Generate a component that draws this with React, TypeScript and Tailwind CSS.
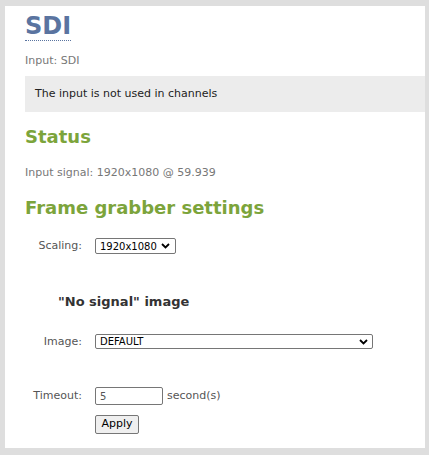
export default function App() {
  return (
    <div className="w-[429px] h-[455px] bg-[#dedede] pl-[5px] pt-[6px] pr-[4px] pb-[7px] font-['DejaVu_Sans',sans-serif]">
      <div className="h-full bg-white pl-[20px] pt-[6px]">
        {/* ===== TITLE ===== */}
        <h1 className="inline-block text-[24px] leading-[28px] font-bold text-[#5a74a0] border-b border-dotted border-[#5a74a0]">
          SDI
        </h1>
        <p className="mt-[13px] text-[11px] leading-[14px] text-[#777]">Input: SDI</p>

        <div className="mt-[8px] h-[36px] bg-[#ececec] pl-[10px] flex items-center text-[11px] text-[#222]">
          The input is not used in channels
        </div>

        {/* ===== STATUS ===== */}
        <h2 className="mt-[14px] text-[18px] leading-[22px] font-bold text-[#7ca43b]">Status</h2>
        <p className="mt-[18px] text-[11px] leading-[14px] text-[#777]">
          Input signal: 1920x1080 @ 59.939
        </p>

        {/* ===== FRAME GRABBER ===== */}
        <h2 className="mt-[17px] text-[18px] leading-[22px] font-bold text-[#7ca43b]">
          Frame grabber settings
        </h2>

        <div className="mt-[19px] flex items-center text-[11px] text-[#555]">
          <span className="w-[57px] text-right">Scaling:</span>
          <span className="ml-[13px] h-[16px] w-[81px] border border-[#767676] rounded-[2px] flex items-center pl-[4px] text-[10px] text-black">
            1920x1080
            <span className="ml-[4px]">
              <Chevron />
            </span>
          </span>
        </div>

        <h3 className="mt-[38px] ml-[33px] text-[13px] leading-[18px] font-bold text-[#333]">
          "No signal" image
        </h3>

        <div className="mt-[23px] flex items-center text-[11px] text-[#555]">
          <span className="w-[57px] text-right">Image:</span>
          <span className="ml-[13px] h-[15px] w-[278px] border border-[#767676] rounded-[2px] flex items-center justify-between pl-[4px] pr-[4px] text-[10px] text-black">
            DEFAULT
            <Chevron />
          </span>
        </div>

        <div className="mt-[37px] flex items-center text-[11px] text-[#555]">
          <span className="w-[57px] text-right">Timeout:</span>
          <span className="ml-[13px] h-[18px] w-[68px] border border-[#767676] rounded-[2px] flex items-center pl-[4px] text-[10px] text-[#555]">
            5
          </span>
          <span className="ml-[4px] text-[11px]">second(s)</span>
        </div>

        <div className="mt-[5px] ml-[70px]">
          <button className="h-[19px] w-[44px] border border-[#767676] rounded-[2px] bg-[#efefef] text-[11px] text-black">
            Apply
          </button>
        </div>
      </div>
    </div>
  );
}

function Chevron() {
  return (
    <svg width="9" height="6" viewBox="0 0 9 6">
      <path d="M1 1 L4.5 4.5 L8 1" fill="none" stroke="#000" strokeWidth="1.8" />
    </svg>
  );
}
